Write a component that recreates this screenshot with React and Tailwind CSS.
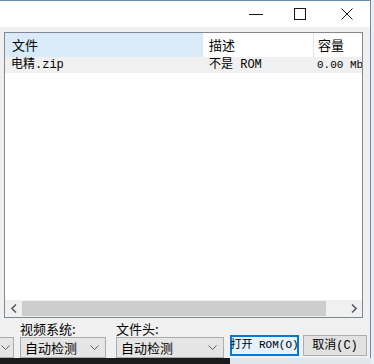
import React from "react";

const cjk = { fontFamily: '"Noto Sans CJK SC", "Noto Sans", sans-serif' };
const mono = { fontFamily: '"Liberation Mono", "Noto Sans CJK SC", monospace' };

const Chevron = () => (
  <svg width="9" height="6" viewBox="0 0 9 6" className="shrink-0">
    <path d="M0.5 0.5 L4.5 4.5 L8.5 0.5" fill="none" stroke="#5f5f5f" strokeWidth="1" />
  </svg>
);

const Combo = ({ width, label }) => (
  <div
    className={`h-[21px] ${width} flex items-center justify-between pl-[4px] pr-[6px] bg-[#e5e5e5] border border-[#acacac]`}
  >
    <span className="text-[13px] leading-none text-black" style={cjk}>
      {label}
    </span>
    <Chevron />
  </div>
);

export default function App() {
  return (
    <div className="w-[374px] h-[364px] flex bg-[#1b1b1b] overflow-hidden">
      <div className="w-[371px] h-[364px] flex flex-col">
        <div className="w-full h-[358px] shrink-0 flex flex-col bg-[#f0f0f0] border-t border-r border-[#6b8aa6] overflow-hidden">
          {/* title bar */}
          <div className="h-[26px] bg-white flex items-center justify-end shrink-0">
            <svg width="14" height="14" viewBox="0 0 14 14" className="mr-[31px]">
              <path d="M0 7.5 H14" stroke="#1a1a1a" strokeWidth="1" />
            </svg>
            <svg width="12" height="12" viewBox="0 0 12 12" className="mr-[35px]">
              <rect x="0.5" y="0.5" width="11" height="11" fill="none" stroke="#1a1a1a" strokeWidth="1" />
            </svg>
            <svg width="12" height="12" viewBox="0 0 12 12" className="mr-[17px]">
              <path d="M0.5 0.5 L11.5 11.5 M11.5 0.5 L0.5 11.5" stroke="#1a1a1a" strokeWidth="1" />
            </svg>
          </div>

          {/* list view */}
          <div className="pt-[5px] pl-[4px] shrink-0">
            <div className="w-[359px] h-[286px] border border-[#828790] bg-white flex flex-col">
              <div className="h-[24px] flex shrink-0 text-[13px] text-black" style={cjk}>
                <div className="w-[197px] bg-[#d9ebf9] flex items-center pl-[7px]">文件</div>
                <div className="w-[111px] flex items-center pl-[6px] border-l border-[#e5e5e5]">描述</div>
                <div className="flex-1 flex items-center pl-[4px] border-l border-[#e5e5e5]">容量</div>
              </div>
              <div className="h-[16px] flex shrink-0 bg-[#f0f0f0] text-[12px] leading-[16px] text-black whitespace-nowrap overflow-hidden" style={mono}>
                <div className="w-[197px] pl-[6px]">电精.zip</div>
                <div className="w-[111px] pl-[7px]">不是 ROM</div>
                <div className="flex-1 pl-[4px] text-[11px] overflow-hidden">0.00 Mb</div>
              </div>
              <div className="flex-1" />
              {/* horizontal scrollbar */}
              <div className="h-[17px] flex items-center bg-[#f0f0f0] shrink-0">
                <div className="w-[17px] flex justify-center">
                  <svg width="6" height="9" viewBox="0 0 6 9">
                    <path d="M5 0.5 L1 4.5 L5 8.5" fill="none" stroke="#606060" strokeWidth="1.6" />
                  </svg>
                </div>
                <div className="w-[304px] h-[15px] bg-[#cdcdcd]" />
                <div className="flex-1 flex justify-end pr-[5px]">
                  <svg width="6" height="9" viewBox="0 0 6 9">
                    <path d="M1 0.5 L5 4.5 L1 8.5" fill="none" stroke="#606060" strokeWidth="1.6" />
                  </svg>
                </div>
              </div>
            </div>
          </div>

          {/* bottom controls */}
          <div className="flex items-end mt-[3px] shrink-0">
            <div className="w-[14px] h-[21px] flex items-center justify-end pr-[3px] bg-[#e5e5e5] border border-l-0 border-[#acacac]">
              <Chevron />
            </div>
            <div className="ml-[6px] flex flex-col">
              <span className="h-[16px] text-[13px] leading-[15px] text-black" style={cjk}>视频系统:</span>
              <Combo width="w-[86px]" label="自动检测" />
            </div>
            <div className="ml-[10px] flex flex-col">
              <span className="h-[16px] text-[13px] leading-[15px] text-black" style={cjk}>文件头:</span>
              <Combo width="w-[108px]" label="自动检测" />
            </div>
            <button
              className="ml-[6px] mb-[2px] w-[69px] h-[21px] bg-[#e5f1fb] border-2 border-[#0078d7] flex items-center justify-center text-[11px] text-black whitespace-nowrap"
              style={mono}
            >
              打开 ROM(O)
            </button>
            <button
              className="ml-[4px] mb-[2px] w-[64px] h-[21px] bg-[#e1e1e1] border border-[#adadad] flex items-center justify-center text-[12px] text-black whitespace-nowrap"
              style={mono}
            >
              取消(C)
            </button>
          </div>
        </div>
        <div className="flex-1 flex">
          <div className="w-[230px] bg-[#1b1b1b]" />
          <div className="flex-1 bg-[#dfe6ec]" />
        </div>
      </div>
      <div className="flex-1 bg-[#e8eef3]" />
    </div>
  );
}
